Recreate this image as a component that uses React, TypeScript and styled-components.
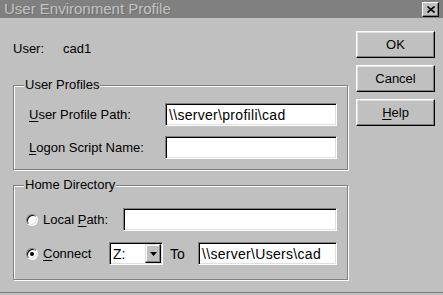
import React from "react";
import styled, { createGlobalStyle } from "styled-components";

const Global = createGlobalStyle`
  html, body { margin: 0; padding: 0; background: #c0c0c0; }
  body { font-family: "Liberation Sans", Arial, sans-serif; font-size: 13px; color: #000; }
`;

const Window = styled.div`
  width: 443px;
  height: 295px;
  background: #c0c0c0;
  display: flex;
  flex-direction: column;
  overflow: hidden;
`;

const TitleBar = styled.div`
  height: 18px;
  flex: none;
  background: #808080;
  display: flex;
  align-items: center;
  justify-content: space-between;
  padding: 0 4px 0 4px;
`;

const TitleText = styled.span`
  font-size: 15px;
  line-height: 18px;
  color: #c4c4c4;
  text-shadow: 1px 1px 0 #6e6e6e;
  white-space: nowrap;
`;

const CloseButton = styled.div`
  width: 15px;
  height: 13px;
  margin-top: 1px;
  background: #c0c0c0;
  border: 1px solid;
  border-color: #fff #000 #000 #fff;
  box-shadow: inset -1px -1px 0 #808080;
  display: flex;
  align-items: center;
  justify-content: center;
`;

const Body = styled.div`
  flex: 1;
  display: flex;
  gap: 8px;
  padding: 13px 8px 0 13px;
  border-bottom: 1px solid #7c7c7c;
  margin-bottom: 2px;
`;

const LeftColumn = styled.div`
  width: 335px;
  display: flex;
  flex-direction: column;
`;

const RightColumn = styled.div`
  width: 79px;
  display: flex;
  flex-direction: column;
  gap: 7px;
`;

const Button = styled.div`
  box-sizing: border-box;
  height: 27px;
  background: #c0c0c0;
  border: 1px solid;
  border-color: #fff #000 #000 #fff;
  box-shadow: inset -1px -1px 0 #808080, inset 1px 1px 0 #dfdfdf;
  display: flex;
  align-items: center;
  justify-content: center;
  font-size: 13px;
`;

const UserRow = styled.div`
  height: 34px;
  display: flex;
  align-items: center;
`;

const UserLabel = styled.span`
  width: 50px;
`;

const Group = styled.div<{ $gap?: number; $padBottom: number }>`
  box-sizing: border-box;
  width: 335px;
  margin-top: ${(p) => p.$gap ?? 0}px;
  border: 1px solid #808080;
  box-shadow: inset 1px 1px 0 #fff, 1px 1px 0 #fff;
  padding: 0 10px ${(p) => p.$padBottom}px 10px;
  display: flex;
  flex-direction: column;
`;

const GroupTitle = styled.span`
  display: block;
  width: fit-content;
  margin: -9px 0 0 0;
  padding: 0 1px;
  line-height: 15px;
  background: #c0c0c0;
`;

const Row = styled.div<{ $top: number; $indent: number }>`
  display: flex;
  align-items: center;
  margin-top: ${(p) => p.$top}px;
  margin-left: ${(p) => p.$indent}px;
`;

const FieldLabel = styled.span<{ $width: number }>`
  width: ${(p) => p.$width}px;
  flex: none;
  white-space: nowrap;
`;

const TextBox = styled.div<{ $width: number; $height?: number }>`
  box-sizing: border-box;
  width: ${(p) => p.$width}px;
  height: ${(p) => p.$height ?? 23}px;
  background: #fff;
  border: 1px solid;
  border-color: #808080 #fff #fff #808080;
  box-shadow: inset 1px 1px 0 #000, inset -1px -1px 0 #dfdfdf;
  padding: 0 3px;
  display: flex;
  align-items: center;
  white-space: nowrap;
  overflow: hidden;
  font-size: 14px;
  letter-spacing: 0.3px;
`;

const RadioWrap = styled.div<{ $width: number }>`
  width: ${(p) => p.$width}px;
  flex: none;
  display: flex;
  align-items: center;
  gap: 5px;
`;

const RadioCircle = styled.span`
  box-sizing: border-box;
  width: 12px;
  height: 12px;
  border-radius: 50%;
  background: #fff;
  border: 1px solid;
  border-color: #808080 #fff #fff #808080;
  box-shadow: inset 1px 1px 0 #000, inset -1px -1px 0 #dfdfdf;
  display: flex;
  align-items: center;
  justify-content: center;
`;

const RadioDot = styled.span`
  width: 4px;
  height: 4px;
  border-radius: 50%;
  background: #000;
`;

const Combo = styled.div`
  box-sizing: border-box;
  width: 54px;
  height: 23px;
  background: #fff;
  border: 1px solid;
  border-color: #808080 #fff #fff #808080;
  box-shadow: inset 1px 1px 0 #000, inset -1px -1px 0 #dfdfdf;
  padding: 1px 1px 1px 3px;
  display: flex;
  align-items: center;
  justify-content: space-between;
  font-size: 14px;
`;

const ComboButton = styled.div`
  box-sizing: border-box;
  width: 16px;
  height: 19px;
  background: #c0c0c0;
  border: 1px solid;
  border-color: #dfdfdf #000 #000 #dfdfdf;
  box-shadow: inset -1px -1px 0 #808080, inset 1px 1px 0 #fff;
  display: flex;
  align-items: center;
  justify-content: center;
`;

const ToLabel = styled.span`
  width: 28px;
  margin-left: 7px;
  flex: none;
  font-size: 14px;
`;

const Key = styled.span`
  text-decoration: underline;
  text-underline-offset: 2px;
`;

const Radio = ({ checked }: { checked?: boolean }) => (
  <RadioCircle>{checked && <RadioDot />}</RadioCircle>
);

export default function App() {
  return (
    <>
      <Global />
      <Window>
        <TitleBar>
          <TitleText>User Environment Profile</TitleText>
          <CloseButton>
            <svg width="8" height="7" viewBox="0 0 8 7">
              <path d="M0.5 0.5 L7.5 6.5 M7.5 0.5 L0.5 6.5" stroke="#000" strokeWidth="1.6" />
            </svg>
          </CloseButton>
        </TitleBar>
        <Body>
          <LeftColumn>
            <UserRow>
              <UserLabel>User:</UserLabel>
              <span>cad1</span>
            </UserRow>
            <Group $gap={20} $padBottom={10}>
              <GroupTitle>User Profiles</GroupTitle>
              <Row $top={11} $indent={5}>
                <FieldLabel $width={136}>
                  <Key>U</Key>ser Profile Path:
                </FieldLabel>
                <TextBox $width={172}>{"\\\\server\\profili\\cad"}</TextBox>
              </Row>
              <Row $top={10} $indent={5}>
                <FieldLabel $width={136}>
                  <Key>L</Key>ogon Script Name:
                </FieldLabel>
                <TextBox $width={172} />
              </Row>
            </Group>
            <Group $gap={15} $padBottom={14}>
              <GroupTitle>Home Directory</GroupTitle>
              <Row $top={16} $indent={2}>
                <RadioWrap $width={97}>
                  <Radio />
                  <span>
                    Local <Key>P</Key>ath:
                  </span>
                </RadioWrap>
                <TextBox $width={214} />
              </Row>
              <Row $top={11} $indent={2}>
                <RadioWrap $width={83}>
                  <Radio checked />
                  <span>
                    <Key>C</Key>onnect
                  </span>
                </RadioWrap>
                <Combo>
                  <span>Z:</span>
                  <ComboButton>
                    <svg width="7" height="4" viewBox="0 0 7 4">
                      <path d="M0 0 H7 L3.5 4 Z" fill="#000" />
                    </svg>
                  </ComboButton>
                </Combo>
                <ToLabel>To</ToLabel>
                <TextBox $width={139}>{"\\\\server\\Users\\cad"}</TextBox>
              </Row>
            </Group>
          </LeftColumn>
          <RightColumn>
            <Button>OK</Button>
            <Button>Cancel</Button>
            <Button>
              <span>
                <Key>H</Key>elp
              </span>
            </Button>
          </RightColumn>
        </Body>
      </Window>
    </>
  );
}
